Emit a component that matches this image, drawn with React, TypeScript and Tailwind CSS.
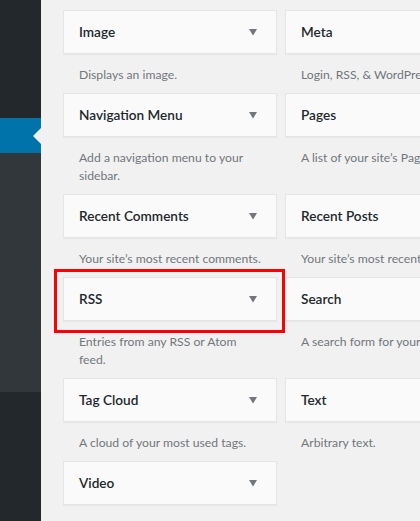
const widgets = [
  { title: "Image", desc: "Displays an image." },
  { title: "Meta", desc: "Login, RSS, & WordPress.org links." },
  { title: "Navigation Menu", desc: "Add a navigation menu to your\nsidebar." },
  { title: "Pages", desc: "A list of your site’s Pages." },
  { title: "Recent Comments", desc: "Your site’s most recent comments." },
  { title: "Recent Posts", desc: "Your site’s most recent Posts." },
  { title: "RSS", desc: "Entries from any RSS or Atom\nfeed.", marked: true },
  { title: "Search", desc: "A search form for your site." },
  { title: "Tag Cloud", desc: "A cloud of your most used tags." },
  { title: "Text", desc: "Arbitrary text." },
  { title: "Video", desc: "" },
];

function Arrow() {
  return (
    <svg width="8" height="7" viewBox="0 0 8 7" className="shrink-0">
      <path d="M0 0 H8 L4 6.5 Z" fill="#72777c" />
    </svg>
  );
}

function Widget({ title, desc, marked }: { title: string; desc: string; marked?: boolean }) {
  return (
    <div className="relative">
      <div className="h-[44px] flex items-center justify-between pl-[15px] pr-[19px] pt-[1px] bg-[#fafafa] border border-[#e5e5e5] shadow-[0_1px_1px_rgba(0,0,0,0.04)]">
        <span className="text-[13.6px] font-semibold text-[#23282d] whitespace-nowrap">{title}</span>
        <Arrow />
      </div>
      {desc && (
        <p className="pt-[12px] pb-[9px] pl-[16px] text-[12.2px] leading-[18px] text-[#72777c] whitespace-pre">
          {desc}
        </p>
      )}
      {marked && (
        <div className="absolute -left-[9px] -top-[8px] w-[231px] h-[64px] border-[3px] border-[#ff0000]" />
      )}
    </div>
  );
}

export default function App() {
  return (
    <div className="flex w-[420px] h-[521px] overflow-hidden bg-[#f1f1f1] font-['Lato',sans-serif]">
      <div className="w-[41px] shrink-0 flex flex-col bg-[#23282d]">
        <div className="h-[118px]" />
        <div className="relative h-[35px] bg-[#0073aa]">
          <div className="absolute right-0 top-[10px] w-0 h-0 border-y-[8px] border-y-transparent border-r-[8px] border-r-[#f1f1f1]" />
        </div>
        <div className="h-[239px] bg-[#32373c]" />
      </div>
      <div className="pl-[22px] pt-[10px]">
        <div className="grid grid-cols-[214px_214px] gap-x-[8px] items-start">
          {widgets.map((w) => (
            <Widget key={w.title} {...w} />
          ))}
        </div>
      </div>
    </div>
  );
}
